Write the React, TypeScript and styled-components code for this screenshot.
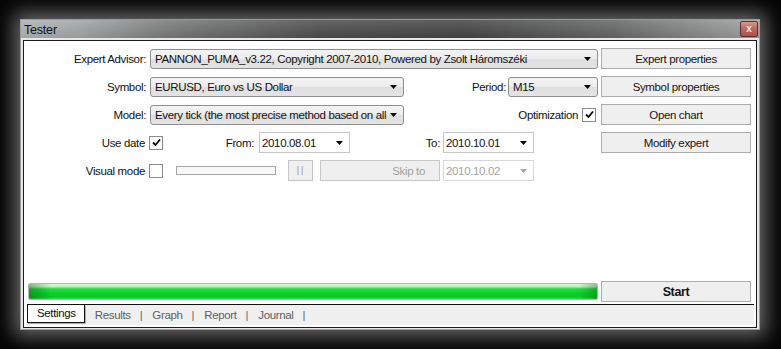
import React from 'react';
import styled, { createGlobalStyle } from 'styled-components';

const GlobalStyle = createGlobalStyle`
  html, body {
    margin: 0;
    padding: 0;
    background: #000;
  }
  body {
    font-family: "Liberation Sans", Arial, sans-serif;
    font-size: 11.5px;
    letter-spacing: -0.35px;
    color: #111;
  }
`;

const Screen = styled.div`
  width: 781px;
  height: 349px;
  box-sizing: border-box;
  padding: 19px 0 0 20px;
  background: #050505;
  overflow: hidden;
`;

const Window = styled.div`
  width: 740px;
  height: 311px;
  box-sizing: border-box;
  display: flex;
  flex-direction: column;
  border: 1px solid #9c9c9c;
  background: #dadada;
  box-shadow: 0 0 18px 6px rgba(190, 190, 190, 0.55);
`;

const TitleBar = styled.div`
  height: 18px;
  display: flex;
  align-items: center;
  justify-content: space-between;
  padding: 0 1px 0 3px;
  background:
    linear-gradient(to bottom, rgba(255, 255, 255, 0.14), rgba(0, 0, 0, 0.06)),
    linear-gradient(to right, #adb1b1 0%, #a0a4a4 8%, #767878 20%, #4c4c4c 40%, #434343 60%, #636565 80%, #9fa1a1 100%);
`;

const Title = styled.span`
  font-size: 12.5px;
  letter-spacing: -0.2px;
  color: #101418;
  padding-top: 1px;
`;

const CloseButton = styled.div`
  width: 16px;
  height: 14px;
  display: flex;
  align-items: center;
  justify-content: center;
  border: 1px solid #5b3030;
  border-radius: 2px;
  background: linear-gradient(to bottom, #d59a91 0%, #bd6a60 45%, #a9544a 100%);
  color: #f4e6e4;
  font-size: 10px;
  font-weight: bold;
  line-height: 1;
  letter-spacing: 0;
`;

const Frame = styled.div`
  flex: 1;
  display: flex;
  padding: 2px 2px 1px 2px;
  background: #e6e6e6;
`;

const Panel = styled.div`
  flex: 1;
  display: flex;
  flex-direction: column;
  background: #fff;
  border: 1px solid #1c1c1c;
`;

const Top = styled.div`
  flex: 1;
  display: flex;
  padding: 7px 5px 0 0;
`;

const Form = styled.div`
  flex: 1;
  display: flex;
  flex-direction: column;
  gap: 7px;
  margin-right: 3px;
`;

const Row = styled.div`
  height: 21px;
  display: flex;
  align-items: center;
`;

const Label = styled.span<{ $w?: number; $gap?: number }>`
  width: ${({ $w }) => ($w ? `${$w}px` : 'auto')};
  flex-shrink: 0;
  text-align: right;
  margin-right: ${({ $gap }) => $gap ?? 4}px;
  white-space: nowrap;
  color: #111;
`;

const Spacer = styled.div`
  flex: 1;
`;

const Combo = styled.div<{ $w?: number }>`
  ${({ $w }) => ($w ? `width: ${$w}px;` : 'flex: 1;')}
  height: 20px;
  box-sizing: border-box;
  display: flex;
  align-items: center;
  padding: 0 6px 0 4px;
  border: 1px solid #8e8f8f;
  border-radius: 3px;
  background: linear-gradient(to bottom, #f3f3f3 0%, #ececec 50%, #dfdfdf 51%, #e3e3e3 100%);
  white-space: nowrap;
  overflow: hidden;
`;

const ComboText = styled.span`
  flex: 1;
  min-width: 0;
  overflow: hidden;
  white-space: nowrap;
`;

const DateBox = styled.div<{ $disabled?: boolean }>`
  width: 91px;
  height: 21px;
  flex-shrink: 0;
  box-sizing: border-box;
  display: flex;
  align-items: center;
  padding: 0 6px 0 2px;
  border: 1px solid ${({ $disabled }) => ($disabled ? '#d9d9d9' : '#c6c6c6')};
  background: #fff;
  color: ${({ $disabled }) => ($disabled ? '#a3a3a3' : '#111')};
`;

const Check = styled.div<{ $gap?: number }>`
  width: 14px;
  height: 14px;
  box-sizing: border-box;
  flex-shrink: 0;
  display: flex;
  align-items: center;
  justify-content: center;
  border: 1px solid #8a8a8a;
  background: #fff;
  margin-right: ${({ $gap }) => $gap ?? 0}px;
`;

const Slider = styled.div`
  width: 100px;
  height: 9px;
  box-sizing: border-box;
  flex-shrink: 0;
  border: 1px solid #a6a6a6;
  background: #f7f7f7;
  margin: 0 12px 0 13px;
`;

const PauseButton = styled.div`
  width: 25px;
  height: 21px;
  box-sizing: border-box;
  flex-shrink: 0;
  display: flex;
  align-items: center;
  justify-content: center;
  border: 1px solid #c5c5c5;
  background: #f0f0f0;
  color: #b0b0b0;
  font-size: 12px;
  letter-spacing: 1px;
  margin-right: 7px;
`;

const Button = styled.div<{ $w?: number; $disabled?: boolean; $bold?: boolean }>`
  width: ${({ $w }) => $w ?? 150}px;
  height: 21px;
  box-sizing: border-box;
  flex-shrink: 0;
  display: flex;
  align-items: center;
  justify-content: ${({ $disabled }) => ($disabled ? 'flex-end' : 'center')};
  padding: ${({ $disabled }) => ($disabled ? '0 14px 0 0' : '0')};
  border: 1px solid ${({ $disabled }) => ($disabled ? '#c8c8c8' : '#acacac')};
  background: #efefef;
  color: ${({ $disabled }) => ($disabled ? '#9f9f9f' : '#151515')};
  font-weight: ${({ $bold }) => ($bold ? 'bold' : 'normal')};
  font-size: ${({ $bold }) => ($bold ? '12.5px' : '11.5px')};
  margin-right: ${({ $disabled }) => ($disabled ? 3 : 0)}px;
`;

const Buttons = styled.div`
  width: 150px;
  display: flex;
  flex-direction: column;
  gap: 7px;
`;

const Bottom = styled.div`
  display: flex;
  align-items: center;
  padding: 0 5px 0 4px;
  margin-bottom: 2px;
`;

const Progress = styled.div`
  flex: 1;
  height: 17px;
  box-sizing: border-box;
  margin-right: 3px;
  border: 1px solid #b4b4b4;
  border-radius: 2px;
  background:
    linear-gradient(to right, rgba(0, 60, 0, 0.35) 0px, rgba(0, 60, 0, 0) 22px, rgba(0, 60, 0, 0) calc(100% - 18px), rgba(0, 60, 0, 0.3) 100%),
    linear-gradient(to bottom, #dbf9db 0%, #b8f0b8 18%, #28dc42 32%, #06d22a 60%, #03c926 85%, #44d45a 100%);
`;

const TabStrip = styled.div`
  height: 20px;
  display: flex;
  align-items: stretch;
  margin: 0 2px 2px 3px;
  border-top: 1px solid #111;
  background: #f0f0f0;
`;

const Tab = styled.div<{ $active?: boolean }>`
  display: flex;
  align-items: center;
  padding: ${({ $active }) => ($active ? '0 8px 1px 9px' : '0 9px 0 10px')};
  color: ${({ $active }) => ($active ? '#111' : '#5e5e5e')};
  background: ${({ $active }) => ($active ? '#fff' : 'transparent')};
  border: ${({ $active }) => ($active ? '1px solid #111' : 'none')};
  border-top: none;
  margin-bottom: ${({ $active }) => ($active ? 2 : 0)}px;
  box-shadow: ${({ $active }) => ($active ? '1px 1px 0 #b0b0b0' : 'none')};
`;

const Sep = styled.span`
  display: flex;
  align-items: center;
  color: #666;
  padding-bottom: 1px;
`;

const Arrow = ({ color = '#000' }: { color?: string }) => (
  <svg width="7" height="4" viewBox="0 0 7 4">
    <polygon points="0,0 7,0 3.5,4" fill={color} />
  </svg>
);

const Tick = () => (
  <svg width="9" height="9" viewBox="0 0 9 9">
    <path d="M1 4.5 L3.5 7 L8 1.5" stroke="#000" strokeWidth="1.8" fill="none" />
  </svg>
);

const tabs = ['Results', 'Graph', 'Report', 'Journal'];

export default function App() {
  return (
    <Screen>
      <GlobalStyle />
      <Window>
        <TitleBar>
          <Title>Tester</Title>
          <CloseButton>x</CloseButton>
        </TitleBar>
        <Frame>
          <Panel>
            <Top>
              <Form>
                <Row>
                  <Label $w={122}>Expert Advisor:</Label>
                  <Combo>
                    <ComboText>PANNON_PUMA_v3.22, Copyright 2007-2010, Powered by Zsolt Háromszéki</ComboText>
                    <Arrow />
                  </Combo>
                </Row>
                <Row>
                  <Label $w={122}>Symbol:</Label>
                  <Combo $w={254}>
                    <ComboText>EURUSD, Euro vs US Dollar</ComboText>
                    <Arrow />
                  </Combo>
                  <Spacer />
                  <Label $gap={2}>Period:</Label>
                  <Combo $w={90}>
                    <ComboText>M15</ComboText>
                    <Arrow />
                  </Combo>
                </Row>
                <Row>
                  <Label $w={122}>Model:</Label>
                  <Combo $w={254}>
                    <ComboText>Every tick (the most precise method based on all</ComboText>
                    <Arrow />
                  </Combo>
                  <Spacer />
                  <Label>Optimization</Label>
                  <Check $gap={2}>
                    <Tick />
                  </Check>
                </Row>
                <Row>
                  <Label $w={121}>Use date</Label>
                  <Check>
                    <Tick />
                  </Check>
                  <Label $w={91} $gap={5}>From:</Label>
                  <DateBox>
                    <ComboText>2010.08.01</ComboText>
                    <Arrow />
                  </DateBox>
                  <Label $w={90} $gap={3}>To:</Label>
                  <DateBox>
                    <ComboText>2010.10.01</ComboText>
                    <Arrow />
                  </DateBox>
                </Row>
                <Row>
                  <Label $w={121}>Visual mode</Label>
                  <Check />
                  <Slider />
                  <PauseButton>II</PauseButton>
                  <Button $w={120} $disabled>
                    Skip to
                  </Button>
                  <DateBox $disabled>
                    <ComboText>2010.10.02</ComboText>
                    <Arrow color="#a8a8a8" />
                  </DateBox>
                </Row>
              </Form>
              <Buttons>
                <Button>Expert properties</Button>
                <Button>Symbol properties</Button>
                <Button>Open chart</Button>
                <Button>Modify expert</Button>
              </Buttons>
            </Top>
            <Bottom>
              <Progress />
              <Button $bold>Start</Button>
            </Bottom>
            <TabStrip>
              <Tab $active>Settings</Tab>
              {tabs.map((t) => (
                <React.Fragment key={t}>
                  <Tab>{t}</Tab>
                  <Sep>|</Sep>
                </React.Fragment>
              ))}
            </TabStrip>
          </Panel>
        </Frame>
      </Window>
    </Screen>
  );
}
